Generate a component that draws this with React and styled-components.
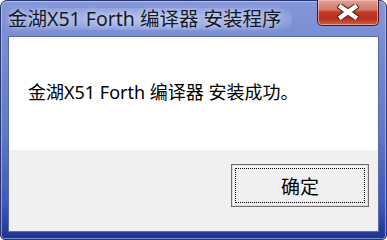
import React from "react";
import styled, { createGlobalStyle } from "styled-components";

const GlobalStyle = createGlobalStyle`
  html, body {
    margin: 0;
    padding: 0;
    width: 387px;
    height: 240px;
    overflow: hidden;
    background: #ffffff;
  }
  #root {
    width: 387px;
    height: 240px;
  }
`;

const Window = styled.div`
  box-sizing: border-box;
  width: 387px;
  height: 240px;
  display: flex;
  flex-direction: column;
  padding: 0 7px 7px 7px;
  border: 1px solid #26356e;
  border-radius: 7px 7px 5px 5px;
  background: linear-gradient(
    180deg,
    #8597d8 0%,
    #7487d0 25%,
    #5f78c9 55%,
    #3d59bb 85%,
    #1d338f 100%
  );
  box-shadow: inset 0 0 0 1px rgba(210, 222, 255, 0.55);
`;

const TitleBar = styled.div`
  height: 35px;
  display: flex;
  align-items: flex-start;
  justify-content: space-between;
`;

const Title = styled.div`
  margin-top: 7px;
  font-family: "Noto Sans", "Noto Sans CJK SC", sans-serif;
  font-size: 19.5px;
  line-height: 22px;
  color: #141a2c;
  white-space: nowrap;
  padding: 0 10px 0 0;
  border-radius: 12px;
  background: radial-gradient(
    ellipse at center,
    rgba(210, 220, 248, 0.6) 0%,
    rgba(190, 203, 242, 0.35) 60%,
    rgba(170, 185, 235, 0) 100%
  );
  text-shadow: 0 0 6px rgba(255, 255, 255, 0.7);
`;

const CloseButton = styled.div`
  box-sizing: border-box;
  width: 62px;
  height: 26px;
  margin-top: -1px;
  display: flex;
  align-items: center;
  justify-content: center;
  padding-bottom: 1px;
  border: 1px solid #4a1a22;
  border-top: none;
  border-radius: 0 0 5px 5px;
  background: linear-gradient(
    180deg,
    #e2a096 0%,
    #d47a6a 38%,
    #c33a27 50%,
    #b5301e 75%,
    #cf6449 100%
  );
  box-shadow: inset 0 0 0 1px rgba(255, 210, 200, 0.55);
`;

const Client = styled.div`
  flex: 1;
  display: flex;
  flex-direction: column;
  border: 1px solid #5a6c9c;
  background: #f0f0f0;
`;

const MessageArea = styled.div`
  height: 113px;
  background: #ffffff;
  display: flex;
  align-items: center;
  padding: 0 0 6px 19px;
  box-sizing: border-box;
`;

const Message = styled.div`
  font-family: "Noto Sans", "Noto Sans CJK SC", sans-serif;
  font-size: 18px;
  color: #000000;
  white-space: nowrap;
`;

const ButtonRow = styled.div`
  flex: 1;
  display: flex;
  justify-content: flex-end;
  align-items: flex-start;
  padding: 14px 9px 0 0;
`;

const Button = styled.button`
  box-sizing: border-box;
  width: 138px;
  height: 43px;
  padding: 3px;
  border: 1px solid #6e6e6e;
  background: #f0f0f0;
  box-shadow: inset 0 0 0 1px #dcdcdc, inset 1px 1px 0 1px #ffffff;
  display: flex;
  cursor: pointer;
`;

const Focus = styled.span`
  flex: 1;
  display: flex;
  align-items: center;
  justify-content: center;
  border: 1px dotted #000000;
  font-family: "Noto Sans CJK SC", sans-serif;
  font-size: 19px;
  color: #000000;
`;

const CloseIcon = () => (
  <svg width="22" height="16" viewBox="0 0 22 16">
    <path
      d="M4 3 L18 13 M18 3 L4 13"
      stroke="#5a2018"
      strokeWidth="6.5"
      strokeLinecap="square"
      fill="none"
    />
    <path
      d="M4 3 L18 13 M18 3 L4 13"
      stroke="#ffffff"
      strokeWidth="4.5"
      strokeLinecap="square"
      fill="none"
    />
  </svg>
);

const App = () => {
  return (
    <>
      <GlobalStyle />
      <Window>
        <TitleBar>
          <Title>金湖X51 Forth 编译器 安装程序</Title>
          <CloseButton>
            <CloseIcon />
          </CloseButton>
        </TitleBar>
        <Client>
          <MessageArea>
            <Message>金湖X51 Forth 编译器 安装成功。</Message>
          </MessageArea>
          <ButtonRow>
            <Button>
              <Focus>确定</Focus>
            </Button>
          </ButtonRow>
        </Client>
      </Window>
    </>
  );
};

export default App;
